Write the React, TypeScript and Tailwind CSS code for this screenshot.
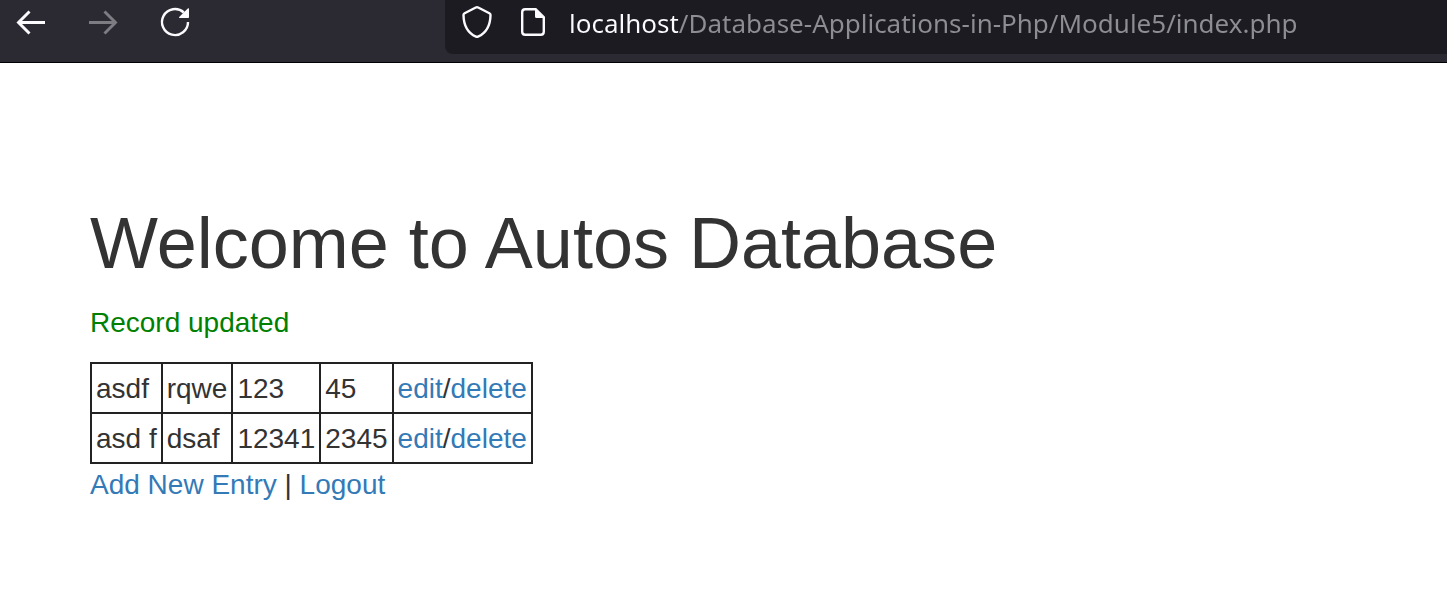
import { useState } from "react";

const autos = [
  { make: "asdf", model: "rqwe", year: "123", mileage: "45" },
  { make: "asd f", model: "dsaf", year: "12341", mileage: "2345" },
];

function BackIcon() {
  return (
    <svg className="size-8" viewBox="0 0 32 32" fill="none" stroke="currentColor" strokeWidth="2.9" aria-hidden="true">
      <path d="M30 16.5H3.5M14.5 5.5L3.5 16.5L14.5 27.5" />
    </svg>
  );
}

function ForwardIcon() {
  return (
    <svg className="size-8" viewBox="0 0 32 32" fill="none" stroke="currentColor" strokeWidth="2.9" aria-hidden="true">
      <path d="M2 16.5H28.5M17.5 5.5L28.5 16.5L17.5 27.5" />
    </svg>
  );
}

function ReloadIcon() {
  return (
    <svg className="size-8" viewBox="0 0 32 32" fill="none" aria-hidden="true">
      <path d="M29 16A13 13 0 1 1 24.8 6.5" stroke="currentColor" strokeWidth="2.4" />
      <path d="M30 2.5V11.2Q30 12 29.2 12H20.5Q19.6 11.8 20.2 11L28.8 2.6Q29.6 2 30 2.5Z" fill="currentColor" />
    </svg>
  );
}

function ShieldIcon() {
  return (
    <svg className="size-8" viewBox="0 0 32 32" fill="none" stroke="currentColor" strokeWidth="2.4" strokeLinejoin="round" aria-hidden="true">
      <path d="M16 1.2Q16.6 1.2 17.2 1.5L28.4 7.2Q29.6 7.9 29.5 9.2C29.3 18.5 25.6 26.8 17 30.6Q16 31 15 30.6C6.4 26.8 2.7 18.5 2.5 9.2Q2.4 7.9 3.6 7.2L14.8 1.5Q15.4 1.2 16 1.2Z" />
    </svg>
  );
}

function PageIcon() {
  return (
    <svg className="size-8" viewBox="0 0 32 32" fill="none" aria-hidden="true">
      <path d="M18.5 3.2H8.2Q5.2 3.2 5.2 6.2V25.8Q5.2 28.8 8.2 28.8H23.8Q26.8 28.8 26.8 25.8V11.5" stroke="currentColor" strokeWidth="2.4" />
      <path d="M18 2H19.2L28 10.8V12H19.5Q18 12 18 10.5Z" fill="currentColor" />
    </svg>
  );
}

function BrowserBar() {
  const [url, setUrl] = useState("localhost/Database-Applications-in-Php/Module5/index.php");
  return (
    <header className="flex items-start border-b border-black bg-[#2b2a33] pb-2 text-[#fbfbfe]">
      <nav aria-label="Browser" className="flex gap-10 pt-1.5 pl-[15px]">
        <button type="button" aria-label="Back"><BackIcon /></button>
        <button type="button" aria-label="Forward" disabled className="text-[#7d7c83]"><ForwardIcon /></button>
        <button type="button" aria-label="Reload"><ReloadIcon /></button>
      </nav>
      <div className="ml-[254px] flex min-w-0 flex-1 items-start rounded-bl-lg bg-[#1c1b22] pb-2 pl-4">
        <div className="flex gap-6 pt-1.5">
          <ShieldIcon />
          <PageIcon />
        </div>
        <input
          type="text"
          aria-label="Address"
          value={url}
          onChange={(event) => setUrl(event.target.value)}
          className="ml-5 h-[46px] min-w-0 flex-1 bg-[linear-gradient(to_right,#fbfbfe_109px,#8d8d92_109px)] bg-clip-text font-['Noto_Sans',sans-serif] text-[26px] text-transparent caret-white outline-none"
        />
      </div>
    </header>
  );
}

export default function App() {
  return (
    <div className="min-h-screen bg-white font-['Liberation_Sans',Arial,sans-serif] text-[28px] leading-10 text-[#333]">
      <BrowserBar />
      <main className="px-[90px] pt-[141px]">
        <h1 className="mb-5 text-[72px] leading-[79px]">Welcome to Autos Database</h1>
        <p className="mb-[19px] text-[#008000]">Record updated</p>
        <table className="border-collapse border-2 border-[#222]">
          <tbody>
            {autos.map((auto) => (
              <tr key={auto.make}>
                <td className="border-2 border-[#222] px-1 pt-[5px] pb-[3px]">{auto.make}</td>
                <td className="border-2 border-[#222] px-1 pt-[5px] pb-[3px]">{auto.model}</td>
                <td className="border-2 border-[#222] px-1 pt-[5px] pb-[3px]">{auto.year}</td>
                <td className="border-2 border-[#222] px-1 pt-[5px] pb-[3px]">{auto.mileage}</td>
                <td className="border-2 border-[#222] px-1 pt-[5px] pb-[3px]">
                  <a href="#edit" className="text-[#337ab7]">edit</a>/<a href="#delete" className="text-[#337ab7]">delete</a>
                </td>
              </tr>
            ))}
          </tbody>
        </table>
        <p className="pt-px">
          <a href="#add" className="text-[#337ab7]">Add New Entry</a> | <a href="#logout" className="text-[#337ab7]">Logout</a>
        </p>
      </main>
    </div>
  );
}
